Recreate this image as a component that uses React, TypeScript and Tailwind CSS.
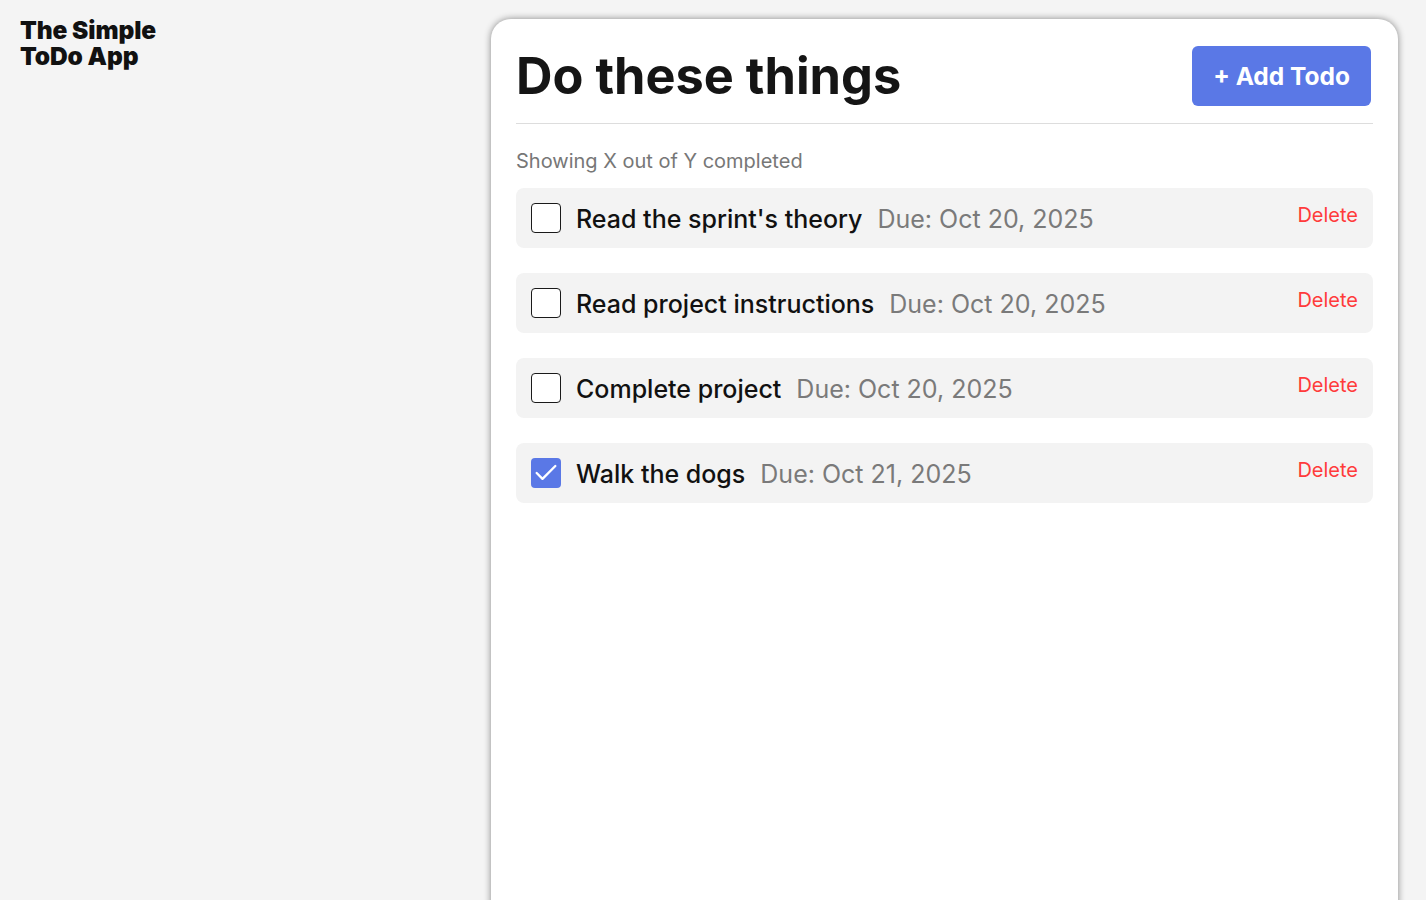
import { Check } from 'lucide-react';

interface Todo {
    id: number;
    title: string;
    due: string;
    done: boolean;
}

const todos: Todo[] = [
    { id: 1, title: "Read the sprint's theory", due: 'Oct 20, 2025', done: false },
    { id: 2, title: 'Read project instructions', due: 'Oct 20, 2025', done: false },
    { id: 3, title: 'Complete project', due: 'Oct 20, 2025', done: false },
    { id: 4, title: 'Walk the dogs', due: 'Oct 21, 2025', done: true },
];

function TodoRow({ todo }: { todo: Todo }) {
    return (
        <li className="flex items-center h-[60px] pl-[15px] pr-[15px] bg-[#f3f3f3] rounded-[8px]">
            {todo.done ? (
                <span className="w-[30px] h-[30px] rounded-[4px] bg-[#5a78e6] flex items-center justify-center shrink-0">
                    <Check className="w-[28px] h-[28px] text-white" strokeWidth={2} />
                </span>
            ) : (
                <span className="w-[30px] h-[30px] rounded-[4px] border border-[#1a1a1a] bg-white shrink-0" />
            )}
            <span className="ml-[15px] text-[25px] font-medium text-[#111] leading-[30px] pt-[2px]">{todo.title}</span>
            <span className="ml-[15px] text-[25px] text-[#7a7a7a] leading-[30px] pt-[2px]">Due: {todo.due}</span>
            <button className="ml-auto self-start mt-[15px] text-[20px] leading-[24px] text-[#ff3b3b]">
                Delete
            </button>
        </li>
    );
}

export default function App() {
    return (
        <div
            className="min-h-screen bg-[#f4f4f4] flex"
            style={{ fontFamily: 'Inter, "Noto Sans", sans-serif' }}
        >
            <aside className="w-[491px] shrink-0 pl-[20px] pt-[17px]">
                <h1 className="text-[24.5px] leading-[26px] font-black text-[#111] tracking-[-0.1px]">
                    The Simple
                    <br />
                    ToDo App
                </h1>
            </aside>

            <main className="w-[907px] mt-[19px] min-h-[900px] bg-white rounded-t-[20px] shadow-[0_0_7px_rgba(0,0,0,0.45)] px-[25px]">
                <header className="flex items-center justify-between pt-[27px] pb-[17px] border-b border-[#dddddd]">
                    <h2 className="text-[50.5px] leading-none font-bold text-[#151515]">
                        Do these things
                    </h2>
                    <button className="h-[60px] mr-[2px] px-[21px] rounded-[6px] bg-[#5a78e6] text-white text-[24.5px] font-bold">
                        + Add Todo
                    </button>
                </header>

                <p className="mt-[24px] text-[20px] leading-[27px] text-[#777]">Showing X out of Y completed</p>

                <ul className="mt-[13px] flex flex-col gap-[25px]">
                    {todos.map((todo) => (
                        <TodoRow key={todo.id} todo={todo} />
                    ))}
                </ul>
            </main>
        </div>
    );
}
